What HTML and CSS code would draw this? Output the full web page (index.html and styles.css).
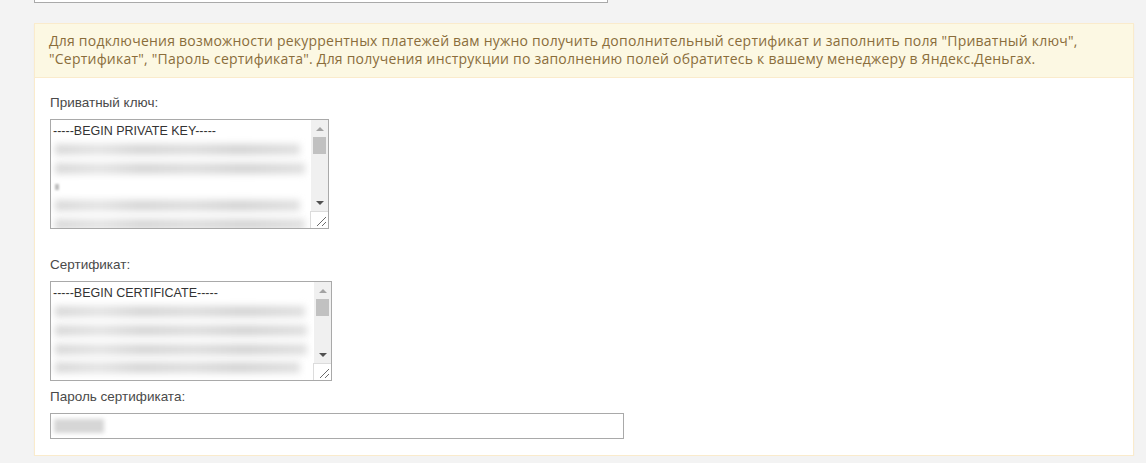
FILE: index.html
```html
<!DOCTYPE html>
<html lang="ru">
<head>
<meta charset="utf-8">
<title>Настройки</title>
<link rel="stylesheet" href="styles.css">
</head>
<body>
<div class="page">
  <div class="top-input"></div>
  <div class="panel">
    <div class="panel-heading">Для подключения возможности рекуррентных платежей вам нужно получить дополнительный сертификат и заполнить поля "Приватный ключ", "Сертификат", "Пароль сертификата". Для получения инструкции по заполнению полей обратитесь к вашему менеджеру в Яндекс.Деньгах.</div>
    <div class="panel-body">
      <div class="field">
        <label class="label">Приватный ключ:</label>
        <div class="textarea ta-key">
          <div class="ta-content">
            <div class="ta-line">-----BEGIN PRIVATE KEY-----</div>
            <div class="blur-row"><span class="blur" style="width:245px"></span></div>
            <div class="blur-row"><span class="blur" style="width:250px"></span></div>
            <div class="blur-row"><span class="blur small" style="width:4px"></span></div>
            <div class="blur-row"><span class="blur" style="width:245px"></span></div>
            <div class="blur-row"><span class="blur" style="width:250px"></span></div>
          </div>
          <div class="scrollbar">
            <div class="sb-btn"><span class="arrow-up"></span></div>
            <div class="sb-thumb"></div>
            <div class="sb-track"></div>
            <div class="sb-btn"><span class="arrow-down"></span></div>
            <div class="resizer"><span class="grip"></span></div>
          </div>
        </div>
      </div>
      <div class="field field-cert">
        <label class="label">Сертификат:</label>
        <div class="textarea ta-cert">
          <div class="ta-content">
            <div class="ta-line">-----BEGIN CERTIFICATE-----</div>
            <div class="blur-row"><span class="blur" style="width:250px"></span></div>
            <div class="blur-row"><span class="blur" style="width:252px"></span></div>
            <div class="blur-row"><span class="blur" style="width:252px"></span></div>
            <div class="blur-row"><span class="blur" style="width:245px"></span></div>
          </div>
          <div class="scrollbar">
            <div class="sb-btn"><span class="arrow-up"></span></div>
            <div class="sb-thumb"></div>
            <div class="sb-track"></div>
            <div class="sb-btn"><span class="arrow-down"></span></div>
            <div class="resizer"><span class="grip"></span></div>
          </div>
        </div>
      </div>
      <div class="field field-pass">
        <label class="label">Пароль сертификата:</label>
        <div class="input"><span class="blur pass"></span></div>
      </div>
    </div>
  </div>
</div>
</body>
</html>
```

FILE: styles.css
```css
* { box-sizing: border-box; }
html, body { margin: 0; padding: 0; }
body {
  background: #f3f3f3;
  font-family: "Liberation Sans", Arial, sans-serif;
  color: #444;
}
.page {
  padding-left: 34px;
  width: 1134px;
}
.top-input {
  width: 574px;
  height: 3px;
  background: #fff;
  border: 1px solid #a9a9a9;
  border-top: none;
}
.panel {
  margin-top: 20px;
  width: 1100px;
  background: #fff;
  border: 1px solid #faebcc;
  box-shadow: 0 1px 1px rgba(0,0,0,.05);
}
.panel-heading {
  background: #fcf8e3;
  color: #8a6d3b;
  border-bottom: 1px solid #faebcc;
  padding: 8px 12px 9px 14px;
  font-family: "Open Sans", "Liberation Sans", sans-serif;
  font-size: 14px;
  line-height: 18px;
  letter-spacing: 0.22px;
}
.panel-body {
  padding: 16px 15px 16px;
}
.field { display: flex; flex-direction: column; align-items: flex-start; }
.label {
  display: block;
  font-size: 13.5px;
  line-height: 18px;
  margin-bottom: 7px;
  color: #4a4a4a;
}
.field-cert { margin-top: 27px; }
.field-pass { margin-top: 7px; }
.textarea {
  display: flex;
  background: #fff;
  border: 1px solid #a9a9a9;
  overflow: hidden;
}
.ta-key { width: 279px; height: 110px; }
.ta-cert { width: 282px; height: 100px; }
.ta-content {
  flex: 1;
  overflow: hidden;
  padding: 2px 0 0 2px;
  font-size: 12.5px;
  line-height: 18.6px;
  color: #333;
}
.ta-line { white-space: nowrap; }
.blur-row { height: 18.6px; display: flex; align-items: center; padding-left: 2px; }
.blur {
  display: block;
  height: 11px;
  background: linear-gradient(90deg, #d8d8d8 0%, #e4e4e4 18%, #d6d6d6 35%, #dedede 55%, #d4d4d4 75%, #e0e0e0 100%);
  filter: blur(3.5px);
}
.blur.small { background: #bcbcbc; height: 6px; filter: blur(1px); }
.scrollbar {
  width: 17px;
  flex: none;
  background: #f0f0f0;
  display: flex;
  flex-direction: column;
}
.sb-btn {
  height: 17px;
  flex: none;
  display: flex;
  align-items: center;
  justify-content: center;
}
.arrow-up {
  width: 0; height: 0;
  border-left: 4px solid transparent;
  border-right: 4px solid transparent;
  border-bottom: 4px solid #a3a3a3;
}
.arrow-down {
  width: 0; height: 0;
  border-left: 4px solid transparent;
  border-right: 4px solid transparent;
  border-top: 4px solid #505050;
}
.sb-thumb {
  height: 17px;
  margin: 0 2px;
  background: #c1c1c1;
  flex: none;
}
.sb-track { flex: 1; }
.resizer {
  height: 17px;
  flex: none;
  background: #fff;
  border-top: 1px solid #dcdcdc;
  border-left: 1px solid #dcdcdc;
  margin-left: -1px;
  display: flex;
  align-items: flex-end;
  justify-content: flex-end;
}
.grip {
  width: 9px;
  height: 9px;
  margin: 0 2px 2px 0;
  background:
    linear-gradient(135deg, transparent 0 46%, #6b6b6b 46% 54%, transparent 54% 100%),
    linear-gradient(135deg, transparent 0 73%, #6b6b6b 73% 81%, transparent 81% 100%);
}
.input {
  width: 574px;
  height: 26px;
  background: #fff;
  border: 1px solid #a9a9a9;
  display: flex;
  align-items: center;
  padding-left: 3px;
}
.blur.pass {
  width: 50px;
  height: 14px;
  background: #d6d6d6;
  filter: blur(2px);
}
```
